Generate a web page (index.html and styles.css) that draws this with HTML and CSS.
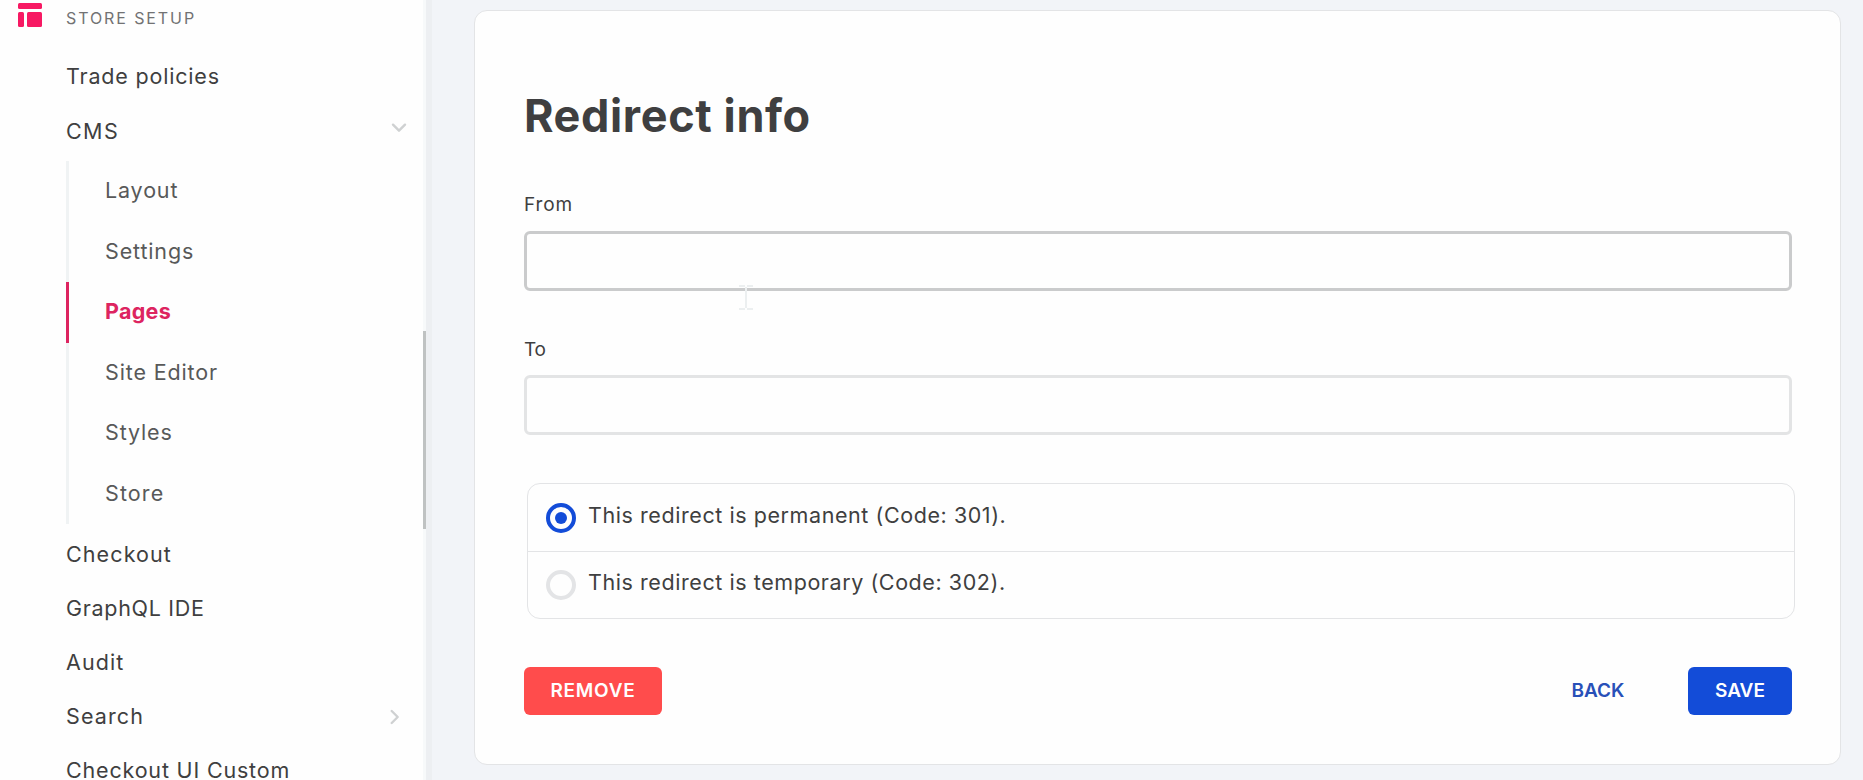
FILE: index.html
```
<!DOCTYPE html>
<html lang="en">
<head>
<meta charset="utf-8">
<title>Redirect info</title>
<link rel="stylesheet" href="styles.css">
</head>
<body>
<div class="app">
  <aside class="sidebar">
    <div class="section">
      <svg class="section-icon" width="24" height="24" viewBox="0 0 24 24" fill="#f71963"><rect width="24" height="6" rx="1.5"/><rect y="9" width="6" height="15" rx="1.5"/><rect x="9" y="9" width="15" height="15" rx="1.5"/></svg>
      <span>STORE SETUP</span>
    </div>
    <nav class="menu">
      <a class="item">Trade policies</a>
      <a class="item item-cms">CMS
        <svg class="chevron-down" width="16" height="10" viewBox="0 0 16 10"><path d="M2 1.7l6 6 6-6"/></svg>
      </a>
      <div class="submenu">
        <a class="subitem">Layout</a>
        <a class="subitem">Settings</a>
        <a class="subitem active">Pages</a>
        <a class="subitem">Site Editor</a>
        <a class="subitem">Styles</a>
        <a class="subitem wide">Store</a>
      </div>
      <a class="item wide">Checkout</a>
      <a class="item tight">GraphQL IDE</a>
      <a class="item wide">Audit</a>
      <a class="item wide">Search
        <svg class="chevron-right" width="10" height="16" viewBox="0 0 10 16"><path d="M1.7 2l6 6-6 6"/></svg>
      </a>
      <a class="item">Checkout UI Custom</a>
    </nav>
    <div class="scroll-thumb"></div>
  </aside>
  <main class="content">
    <form class="card">
      <h1 class="title">Redirect info</h1>
      <label class="label" for="from">From</label>
      <input class="input focused" id="from" type="text">
      <label class="label label-to" for="to">To</label>
      <input class="input" id="to" type="text">
      <div class="options">
        <div class="option">
          <svg width="30" height="30" viewBox="0 0 30 30"><circle cx="15" cy="15" r="13" fill="none" stroke="#134cd8" stroke-width="4"/><circle cx="15" cy="15" r="6" fill="#134cd8"/></svg>
          <span>This redirect is permanent (Code: 301).</span>
        </div>
        <div class="option">
          <svg width="30" height="30" viewBox="0 0 30 30"><circle cx="15" cy="15" r="13" fill="none" stroke="#e3e4e6" stroke-width="4"/></svg>
          <span>This redirect is temporary (Code: 302).</span>
        </div>
      </div>
      <div class="actions">
        <button class="button remove" type="button">REMOVE</button>
        <button class="button back" type="button">BACK</button>
        <button class="button save" type="button">SAVE</button>
      </div>
    </form>
    <svg class="text-cursor" width="14" height="25" viewBox="0 0 14 25"><path d="M0 1h6M8 1h6M7 2v21M0 24h6M8 24h6"/></svg>
  </main>
</div>
</body>
</html>
```
FILE: styles.css
```
* { box-sizing: border-box; }
body {
  margin: 0;
  height: 780px;
  overflow: hidden;
  font-family: Inter, "Liberation Sans", sans-serif;
  color: #3f3f40;
}
.app { display: flex; height: 780px; background: #f2f4f8; }

.sidebar {
  position: relative;
  flex: none;
  width: 432px;
  height: 780px;
  overflow: hidden;
  background: linear-gradient(to right, #fefefe 423px, #f7f9fa 423px, #f7f9fa 426px, #edeff2 426px);
}
.section {
  display: flex;
  align-items: center;
  gap: 24px;
  height: 50px;
  padding: 0 0 14px 18px;
  font-size: 16px;
  letter-spacing: 1.9px;
  color: #727273;
}
.section-icon { margin-top: -6px; }
.menu { display: flex; flex-direction: column; }
.item {
  display: flex;
  align-items: center;
  justify-content: space-between;
  flex: none;
  height: 54px;
  padding: 0 26px 2px 66px;
  font-size: 21.5px;
  line-height: 26px;
  letter-spacing: 0.82px;
}
.item.wide, .subitem.wide { letter-spacing: 1.1px; }
.item.tight { letter-spacing: 0.7px; }
.item-cms { height: 53px; padding-bottom: 0; letter-spacing: 1.4px; }
.item path {
  fill: none;
  stroke: #cfd1d2;
  stroke-width: 2.4;
  stroke-linecap: round;
  stroke-linejoin: round;
}
.chevron-down { margin: -6px -1px 0 0; }
.chevron-right { margin: 2px 6px 0 0; }
.submenu {
  display: flex;
  flex-direction: column;
  margin: 4px 0 4px 66px;
}
.subitem {
  display: flex;
  align-items: center;
  height: 60.5px;
  padding: 0 0 2px 36px;
  border-left: 3px solid #f0f3f4;
  font-size: 21.5px;
  line-height: 26px;
  letter-spacing: 0.85px;
  color: #585959;
}
.subitem.active {
  border-color: #dd2460;
  font-weight: 700;
  letter-spacing: 0.3px;
  color: #dd2460;
}
.scroll-thumb {
  position: absolute;
  left: 423px;
  top: 331px;
  width: 3px;
  height: 198px;
  background: #bfc2c2;
}

.content { position: relative; flex: 1; padding: 10px 22px 0 42px; }
.card {
  display: flex;
  flex-direction: column;
  height: 755px;
  padding: 77px 48px 0 49px;
  border: 1px solid #e3e4e6;
  border-radius: 13px;
  background: #fefefe;
}
.title {
  margin: 0 0 46px;
  font-size: 45px;
  line-height: 56px;
  font-weight: 700;
  letter-spacing: 0.62px;
}
.label {
  height: 30px;
  margin: 0 0 11px;
  font-size: 19px;
  line-height: 30px;
  letter-spacing: 0.9px;
}
.label-to { margin: 44px 0 10px; letter-spacing: -0.4px; }
.input {
  width: 100%;
  height: 60px;
  border: 3px solid #e3e4e5;
  border-radius: 6px;
  background: #fefefe;
  outline: 0;
}
.focused { border-color: #cacbcc; }
.options {
  margin: 48px -3px 0 3px;
  border: 1px solid #e3e4e6;
  border-radius: 13px;
}
.option {
  display: flex;
  align-items: center;
  gap: 12px;
  height: 67px;
  padding-left: 18px;
  font-size: 21.5px;
  line-height: 26px;
  letter-spacing: 0.57px;
}
.option span { padding-bottom: 6px; }
.option + .option { border-top: 1px solid #e3e4e6; }
.actions { display: flex; align-items: center; margin-top: 48px; }
.button {
  height: 48px;
  padding: 0 0 2px;
  border: 0;
  border-radius: 6px;
  font: 600 19px Inter, "Liberation Sans", sans-serif;
  color: #fefefe;
}
.remove { width: 138px; background: #ff4c4c; letter-spacing: 0.75px; }
.back { width: 104px; margin: 0 38px 0 auto; background: none; color: #2850b8; }
.save { width: 104px; background: #134cd8; }
.text-cursor { position: absolute; left: 307px; top: 285px; }
.text-cursor path { fill: none; stroke: #eceff0; stroke-width: 2; }
```
